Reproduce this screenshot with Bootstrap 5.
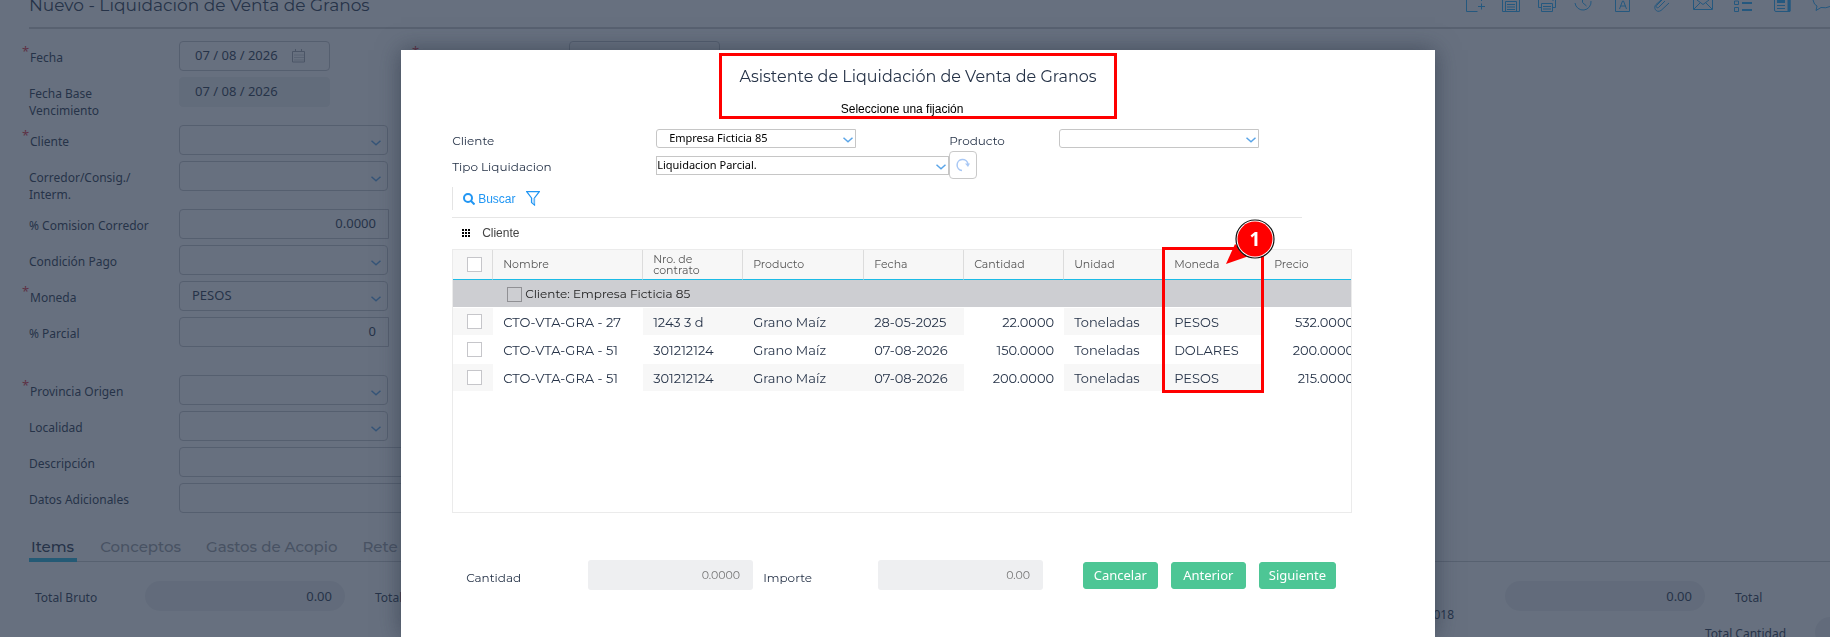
<!DOCTYPE html>
<html lang="es">
<head>
<meta charset="utf-8">
<meta name="viewport" content="width=device-width, initial-scale=1">
<title>Liquidación de Venta de Granos</title>
<link href="https://cdn.jsdelivr.net/npm/bootstrap@5.3.0/dist/css/bootstrap.min.css" rel="stylesheet">
<style>
  :root { --brand: Montserrat, Inter, sans-serif; --form: "Noto Sans", sans-serif; --ink: #263348; --red: #ff0000; }
  html, body { height: 100%; overflow: hidden; }
  body { font-family: var(--form); font-size: 13px; line-height: 17px; color: var(--ink); background: #fff; }
  main { height: 100%; overflow: hidden; }
  input, select, button { font: inherit; color: inherit; }

  /* page header, scrolled a little out of view */
  .page-head { height: 37px; margin: -8px 0 12px 29px; border-bottom: 2px solid #cbccce; }
  .page-head h1 { font: 400 17px/26px var(--brand); }
  .tool-row { padding-top: 8px; color: #20aeff; width: 369px; }
  .tool-row svg, .glyph { display: block; fill: none; stroke: currentColor; }

  .entry { display: flex; align-items: flex-start; min-height: 36px; padding-left: 29px; }
  .entry > label { flex: 0 0 150px; padding: 8px 16px 6px 0; font-size: 12px; }
  .entry-half { width: 390px; }
  .req::before { content: "*"; position: absolute; left: -7px; top: 2px; color: #e0303c; font-size: 13px; }
  .entry > label.req { position: relative; padding-left: 1px; }
  .entry-last { margin-bottom: 22px; }
  .box { height: 30px; border: 1px solid #c3c5c9; border-radius: 4px; background: transparent; padding: 0 12px 2px; width: 209px; }
  .box-date { width: 151px; padding-left: 15px; }
  .box-off { background: #eff0f1; border-color: #eff0f1; }
  .num { width: 210px; text-align: right; border-top-right-radius: 0; border-bottom-right-radius: 0; }
  .pick { appearance: none; background: no-repeat right 6px top 14px / 10px 6px url("data:image/svg+xml,%3Csvg xmlns='http://www.w3.org/2000/svg' viewBox='0 0 10 6'%3E%3Cpath d='M.5 .8 5 4.8 9.500 .8' fill='none' stroke='%235aa5e8' stroke-width='1.500'/%3E%3C/svg%3E"); }
  .date-wrap { position: relative; }
  .date-wrap svg { position: absolute; left: 113px; top: 8px; color: #a0a4ab; }

  .tab-strip { margin: 11px 0 0 29px; border-bottom: 1px solid #c9cbcd; gap: 21px; }
  .tab-strip a { font: 500 15px/20px var(--brand); color: #989ba1; text-decoration: none; padding: 7px 2px 1px; border-bottom: 4px solid transparent; margin-bottom: -1px; }
  .tab-strip a.on { color: var(--ink); border-color: #20b4dc; padding-right: 3px; }
  .sum-row { padding-left: 35px; padding-top: 19px; }
  .sum { display: flex; flex: 0 0 340px; height: 30px; }
  .sum > label { flex: 0 0 110px; padding-top: 8px; font-size: 12px; }
  .sum .wrapped { display: block; width: 59px; padding-top: 17px; }
  .pill { width: 200px; height: 30px; border: 0; border-radius: 15px; background: #eeeff0; text-align: right; padding: 0 13px; }
  .sum-row2 { margin-left: calc(100% - 125px); margin-top: 6px; }

  .shade { position: fixed; inset: 0; background: rgba(38, 51, 72, .7); }

  .modal-dialog.wizard { width: 56.5vw; max-width: none; margin: 50px auto 0 21.92vw; }
  .wizard .modal-content { min-height: calc(100vh - 50px); border: 0; border-radius: 0; box-shadow: 0 0 22px rgba(30, 40, 55, .5); padding: 3px 51px 0; color: var(--ink); }
  .callout { border: 3px solid var(--red); }
  .wiz-head { width: 398px; height: 66px; margin: 0 auto; text-align: center; padding-top: 8px; }
  .wiz-head h2 { font: 400 16px/26px var(--brand); margin: 0 0 11px; }
  .wiz-head p { font: 12px/16px "Liberation Sans", sans-serif; color: #000; margin: 0; padding-right: 32px; }
  .wiz-form { display: grid; grid-template-columns: 204px 293px 110px 200px; grid-template-rows: 22px 28px; padding-top: 10px; align-items: start; }
  .wiz-form label { font: 12px/16px var(--brand); padding-top: 4px; }
  .wiz-form .slim { height: 19px; width: 200px; border: 1px solid #c6c6c6; border-radius: 3px 0 0 3px; background-color: #fff; background-position: right 2px top 7px; color: #000; font-size: 11px; line-height: 16px; padding: 0 12px 1px; }
  .wiz-form .second { align-self: center; }
  .wiz-form .wide { width: 293px; border-radius: 0; padding: 0; }
  .redo { width: 28px; height: 28px; border: 1px solid #c9c9c9; border-radius: 4px; background: #fff; padding: 6px; color: #a9c8f5; }
  .act { margin-top: 8px; height: 23px; border-left: 1px solid #e4e4e4; padding-left: 10px; gap: 11px; color: #2196f3; }
  .act button { border: 0; background: none; padding: 0; font: 12px/16px "Liberation Sans", sans-serif; color: inherit; display: flex; align-items: center; gap: 3px; }
  .rule { width: 850px; border-bottom: 1px solid #e6e6e6; height: 8px; }
  .group-by { height: 31px; padding: 0 0 2px 10px; gap: 12px; font: 12px/16px "Liberation Sans", sans-serif; color: #444; }

  .grid-wrap { position: relative; height: 264px; width: 900px; }
  .grid-clip { height: 100%; border: 1px solid #ebebeb; overflow: hidden; }
  .grid { table-layout: fixed; width: 911px; border-collapse: separate; border-spacing: 0; font: 13px/16px var(--brand); }
  .grid th { height: 30px; background: #f7f7f7; border-bottom: 1px solid #1cbbe6; border-right: 1px solid #dcdcdc; font-weight: 400; font-size: 11px; line-height: 11px; color: #555; padding: 0 10px; }
  .grid td { height: 28px; padding: 0 10px; border-bottom: 1px solid #fff; white-space: nowrap; }
  .grid .band td { background: #cdced2; font-size: 12px; color: #222; padding: 1px 0 0 54px; }
  .grid .odd td { background: #f7f7f7; }
  .grid .odd td.plain { background: #fff; }
  .tick { appearance: none; display: block; width: 15px; height: 15px; margin: 0; border: 1px solid #c6c6ca; background: #fff; }
  .grid .pickcol { padding: 0 0 0 14px; }
  .band .tick { background: transparent; border-color: #909094; margin-right: 3px; }
  .mark-col { position: absolute; left: 710px; top: -2px; width: 102px; height: 146px; }
  .mark-pin { position: absolute; left: 771px; top: -31px; }

  .wiz-foot { padding: 47px 48px 0 14px; }
  .wiz-foot label { font: 12px/16px var(--brand); padding-top: 5px; }
  .wiz-foot .lead-q { width: 122px; }
  .wiz-foot .lead-i { width: 125px; padding-left: 10px; }
  .calm { width: 165px; height: 30px; border: 0; border-radius: 3px; background: #eeeff1; color: #777; text-align: right; padding: 0 13px; font: 11px/16px var(--brand); }
  .steps { gap: 13px; }
  .go { --bs-btn-bg: #4dc695; --bs-btn-border-color: #4dc695; --bs-btn-color: #fff; height: 27px; min-width: 75px; padding: 0 9px; font-size: 13px; line-height: 25px; border-radius: 3px; }
</style>
</head>
<body>
<main>
  <header class="page-head d-flex justify-content-between">
    <h1 class="m-0">Nuevo - Liquidación de Venta de Granos</h1>
    <div class="tool-row">
      <svg width="369" height="13" viewBox="0 0 369 13">
        <path d="M5.500 0v11.500h11M20.500 0v1M20.500 3.500v6M17 6.500h7"/>
        <path d="M41.500 0v11.500h17V0M44.500 11V1.500h11V11M46 4.500h8M46 7h8M46 9.500h8"/>
        <path d="M77.500 0v7.500h3M94.500 0v7.500h-3M80.500 11.500v-8h11v8zM82 6.500h8M82 9h8M92 0v1"/>
        <path d="M114 3a8 8 0 0 0 16-2M121.500 0v2.500l4 3.500"/>
        <path d="M154.500 0v11.500h14V0M158.500 9l3-8h1l3 8M159.500 6h5"/>
        <path d="M208 3l-8 7.500c-5 3-8-3-5-6l5-4.500M204 1l-6.500 6.500c-2 1-3-1-1.500-2.500L201 0"/>
        <path d="M232.500 0v9.500h19V0M233 9l6-6M251 9l-6-6M236 0l6 4.500 6-4.500"/>
        <path d="M273.500 1h4v3.500h-4zM273.500 7.500h4v4h-4z"/><path d="M281 3h10M281 10h10" stroke-width="2"/>
        <path d="M313.500 0v10q0 1.500 1.500 1.500h14V0M316 5.500h8M316 8.500h8"/><path d="M316 1.500h8M328 0v11" stroke-width="3"/>
        <path d="M352 0q1 5 4 6l-1 4.500 5-3q5 1 9-1"/>
      </svg>
    </div>
  </header>

  <form>
    <div class="d-flex">
      <div class="entry entry-half"><label class="req" for="f1">Fecha</label>
        <div class="date-wrap"><input id="f1" class="box box-date" value="07 / 08 / 2026">
          <svg class="glyph" width="13" height="14" viewBox="0 0 13 14"><path d="M.5 2.500h12v10.500H.5zM3.500 0v3M9.500 0v3"/><path d="M2.500 6h9M2.500 8.500h9M2.500 11h9" stroke-dasharray="1 1"/></svg>
        </div>
      </div>
      <div class="entry"><label class="req" for="f1b"></label><input id="f1b" class="box box-date" value="07 / 08 / 2026" aria-label="Fecha"></div>
    </div>
    <div class="entry"><label for="f2">Fecha Base Vencimiento</label><input id="f2" class="box box-date box-off" value="07 / 08 / 2026" readonly></div>
    <div class="entry"><label class="req" for="f3">Cliente</label><select id="f3" class="box pick"><option></option></select></div>
    <div class="entry"><label for="f4">Corredor/Consig./ Interm.</label><select id="f4" class="box pick"><option></option></select></div>
    <div class="entry"><label for="f5">% Comision Corredor</label><input id="f5" class="box num" value="0.0000"></div>
    <div class="entry"><label for="f6">Condición Pago</label><select id="f6" class="box pick"><option></option></select></div>
    <div class="entry"><label class="req" for="f7">Moneda</label><select id="f7" class="box pick"><option>PESOS</option></select></div>
    <div class="entry entry-last"><label for="f8">% Parcial</label><input id="f8" class="box num" value="0"></div>
    <div class="entry"><label class="req" for="f9">Provincia Origen</label><select id="f9" class="box pick"><option></option></select></div>
    <div class="entry"><label for="f10">Localidad</label><select id="f10" class="box pick"><option></option></select></div>
    <div class="entry"><label for="f11">Descripción</label><input id="f11" class="box w-50"></div>
    <div class="entry"><label for="f12">Datos Adicionales</label><input id="f12" class="box w-50"></div>
  </form>

  <nav class="tab-strip d-flex">
    <a class="on" href="#">Items</a><a href="#">Conceptos</a><a href="#">Gastos de Acopio</a><a href="#">Rete</a>
  </nav>
  <div class="sum-row d-flex">
    <div class="sum"><label for="t1">Total Bruto</label><input id="t1" class="pill" value="0.00" readonly></div>
    <div class="sum"><label>Total</label></div>
    <div class="sum"></div>
    <div class="sum"></div>
    <div class="sum"><label for="t5" class="text-end"><span class="wrapped">018</span></label><input id="t5" class="pill" value="0.00" readonly></div>
    <div class="sum"><label>Total</label></div>
  </div>
  <div class="sum sum-row2"><label for="t7">Total Cantidad</label><input id="t7" class="pill" readonly></div>
</main>

<div class="shade"></div>

<div class="modal d-block overflow-hidden" role="dialog" aria-labelledby="wizTitle">
  <div class="modal-dialog wizard">
    <div class="modal-content">
      <header class="wiz-head callout">
        <h2 id="wizTitle">Asistente de Liquidación de Venta de Granos</h2>
        <p>Seleccione una fijación</p>
      </header>

      <div class="wiz-form">
        <label for="w1">Cliente</label>
        <select id="w1" class="slim pick"><option>Empresa Ficticia 85</option></select>
        <label for="w2">Producto</label>
        <select id="w2" class="slim pick"><option></option></select>
        <label for="w3" class="second">Tipo Liquidacion</label>
        <select id="w3" class="slim pick wide second"><option>Liquidacion Parcial.</option></select>
        <button type="button" class="redo" aria-label="Actualizar"><svg class="glyph" width="14" height="14" viewBox="0 0 14 14"><path d="M6 12.500A5.500 5.500 0 1 1 12 6" stroke-width="1.500"/><path d="M9 5.500h5L12 9z" fill="currentColor" stroke="none"/></svg></button>
      </div>

      <div class="act d-flex align-items-center">
        <button type="button"><svg class="glyph" width="12" height="12" viewBox="0 0 12 12"><circle cx="5" cy="5" r="4" stroke-width="2"/><path d="m8 8 3.500 3.500" stroke-width="2"/></svg>Buscar</button>
        <button type="button" aria-label="Filtrar"><svg class="glyph" width="14" height="15" viewBox="0 0 14 15"><path d="M.7 .700h12.600L8.500 7v7L5.500 11.500V7z" stroke-width="1.200"/><path d="M6.500 7h2v6l-2-1.500z" fill="#a9d4fa" stroke="none"/></svg></button>
      </div>
      <div class="rule"></div>
      <div class="group-by d-flex align-items-center">
        <svg width="8" height="8" viewBox="0 0 8 8"><path d="M0 0h2v2H0zM3 0h2v2H3zM6 0h2v2H6zM0 3h2v2H0zM3 3h2v2H3zM6 3h2v2H6zM0 6h2v2H0zM3 6h2v2H3zM6 6h2v2H6z"/></svg>
        <span>Cliente</span>
      </div>

      <div class="grid-wrap">
        <div class="grid-clip">
          <table class="grid">
            <colgroup><col style="width:40px"><col style="width:150px"><col style="width:100px"><col style="width:121px"><col style="width:100px"><col style="width:100px"><col style="width:100px"><col style="width:100px"><col style="width:100px"></colgroup>
            <thead><tr>
              <th class="pickcol"><input type="checkbox" class="tick" aria-label="Todos"></th>
              <th>Nombre</th><th>Nro. de contrato</th><th>Producto</th><th>Fecha</th><th>Cantidad</th><th>Unidad</th><th>Moneda</th><th>Precio</th>
            </tr></thead>
            <tbody>
              <tr class="band"><td colspan="9"><div class="d-flex align-items-center"><input type="checkbox" class="tick" id="g1"><label for="g1">Cliente: Empresa Ficticia 85</label></div></td></tr>
              <tr class="odd"><td class="pickcol"><input type="checkbox" class="tick" aria-label="Fila 1"></td><td class="plain">CTO-VTA-GRA - 27</td><td>1243 3 d</td><td>Grano Maíz</td><td>28-05-2025</td><td class="plain text-end">22.0000</td><td>Toneladas</td><td>PESOS</td><td class="plain text-end">532.0000</td></tr>
              <tr><td class="pickcol"><input type="checkbox" class="tick" aria-label="Fila 2"></td><td>CTO-VTA-GRA - 51</td><td>301212124</td><td>Grano Maíz</td><td>07-08-2026</td><td class="text-end">150.0000</td><td>Toneladas</td><td>DOLARES</td><td class="text-end">200.0000</td></tr>
              <tr class="odd"><td class="pickcol"><input type="checkbox" class="tick" aria-label="Fila 3"></td><td class="plain">CTO-VTA-GRA - 51</td><td>301212124</td><td>Grano Maíz</td><td>07-08-2026</td><td class="plain text-end">200.0000</td><td>Toneladas</td><td>PESOS</td><td class="plain text-end">215.0000</td></tr>
            </tbody>
          </table>
        </div>
        <div class="mark-col callout"></div>
        <svg class="mark-pin" width="52" height="50" viewBox="0 0 52 50">
          <path d="M3 46 12 26 26 38z" fill="#f00"/>
          <circle cx="32" cy="21" r="19" fill="#fff" stroke="#111" stroke-width="1.200"/>
          <circle cx="32" cy="21" r="17.500" fill="#f00"/>
          <text x="32" y="28" text-anchor="middle" fill="#fff" font-family="Noto Sans" font-weight="700" font-size="19">1</text>
        </svg>
      </div>

      <div class="wiz-foot d-flex align-items-center">
        <label for="q1" class="lead-q">Cantidad</label>
        <input id="q1" class="calm" value="0.0000" readonly>
        <label for="q2" class="lead-i">Importe</label>
        <input id="q2" class="calm" value="0.00" readonly>
        <div class="steps d-flex ms-auto">
          <button type="button" class="btn go">Cancelar</button>
          <button type="button" class="btn go">Anterior</button>
          <button type="button" class="btn go">Siguiente</button>
        </div>
      </div>
    </div>
  </div>
</div>
<script src="https://cdn.jsdelivr.net/npm/bootstrap@5.3.0/dist/js/bootstrap.bundle.min.js"></script>
</body>
</html>
